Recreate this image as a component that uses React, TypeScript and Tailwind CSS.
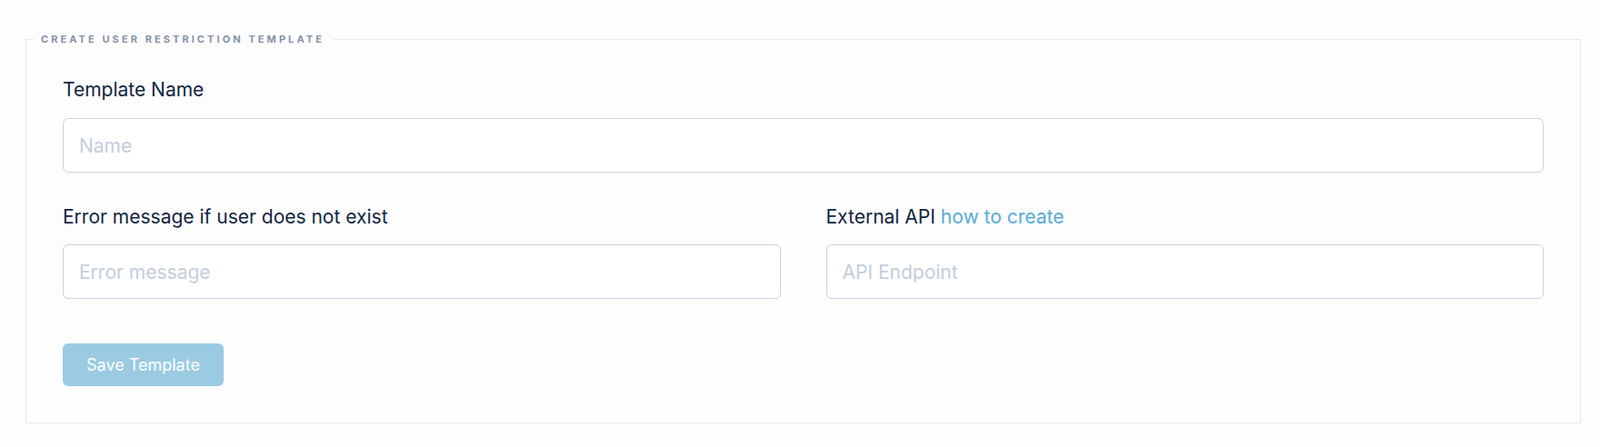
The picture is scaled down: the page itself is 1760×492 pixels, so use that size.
import React from 'react';

const inputCls =
  'block w-full h-[60px] rounded-[6px] border border-[#c8d3e1] bg-white px-[17px] text-[21px] text-[#12263f] placeholder:text-[#c3cedb] outline-none';

const labelCls = 'block text-[21px] leading-[28px] text-[#12263f]';

export default function App() {
  return (
    <div className="min-h-[492px] bg-[#fdfdfe] pt-[35px] pl-[28px] pr-[21px] font-['Inter',sans-serif]">
      <fieldset className="border border-[#e3e8ef] pl-[40px] pr-[40px] pt-[34px] pb-[40px]">
        <legend className="-ml-[32px] pl-[8px] pr-[10px] text-[11px] leading-[16px] font-bold tracking-[0.28em] text-[#8492a6]">
          CREATE USER RESTRICTION TEMPLATE
        </legend>

        <label className={`${labelCls} mb-[17px]`}>Template Name</label>
        <input className={inputCls} placeholder="Name" />

        <div className="grid grid-cols-2 gap-x-[50px] mt-[35px]">
          <div>
            <label className={`${labelCls} mb-[16px]`}>Error message if user does not exist</label>
            <input className={inputCls} placeholder="Error message" />
          </div>
          <div>
            <label className={`${labelCls} mb-[16px]`}>
              External API <a className="text-[#55acd6] cursor-pointer">how to create</a>
            </label>
            <input className={inputCls} placeholder="API Endpoint" />
          </div>
        </div>

        <button
          type="button"
          className="mt-[49px] h-[47px] w-[177px] rounded-[6px] bg-[#9acbe3] text-[18px] text-white"
        >
          Save Template
        </button>
      </fieldset>
    </div>
  );
}
